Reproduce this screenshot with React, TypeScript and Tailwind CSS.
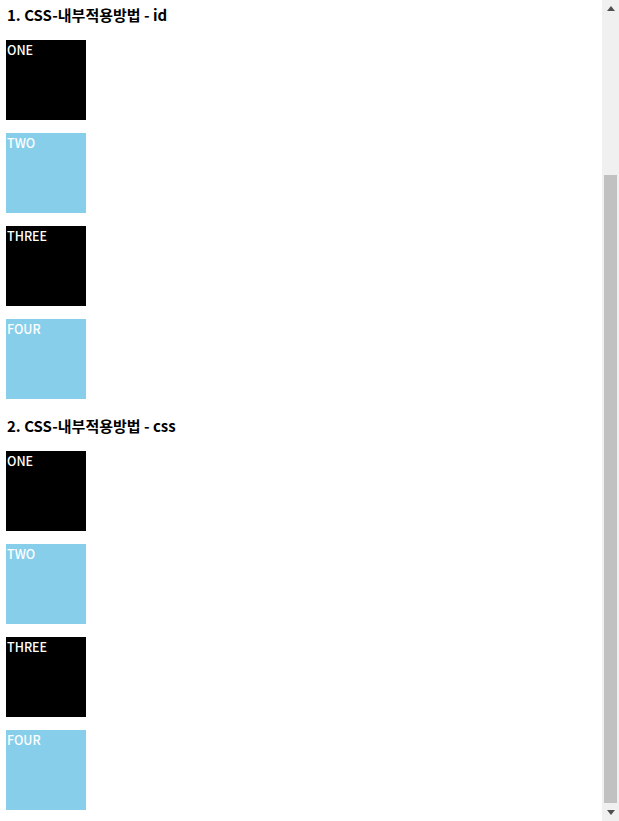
import React from "react";

const font = { fontFamily: '"Noto Sans CJK KR", "Noto Sans", sans-serif' };

function Box({ label, dark }: { label: string; dark: boolean }) {
  return (
    <div
      className={`w-[80px] h-[80px] pl-[1px] text-white text-[12.5px] leading-[20px] font-medium ${dark ? "bg-black" : "bg-[#87ceeb]"}`}
    >
      {label}
    </div>
  );
}

function Section({ title }: { title: string }) {
  return (
    <div className="flex flex-col">
      <h2 className="text-[15px] leading-[22px] font-bold text-black pl-[1px] mb-[14px]">{title}</h2>
      <div className="flex flex-col gap-[13px]">
        <Box label="ONE" dark />
        <Box label="TWO" dark={false} />
        <Box label="THREE" dark />
        <Box label="FOUR" dark={false} />
      </div>
    </div>
  );
}

export default function App() {
  return (
    <div className="w-[619px] h-[821px] flex overflow-hidden bg-white" style={font}>
      <div className="flex-1 flex flex-col pl-[6px] pt-[4px] gap-[16px]">
        <Section title="1. CSS-내부적용방법 - id" />
        <Section title="2. CSS-내부적용방법 - css" />
      </div>
      <div className="w-[17px] h-full bg-[#f0f0f0] flex flex-col items-center">
        <div className="h-[17px] flex items-center justify-center">
          <svg width="8" height="5" viewBox="0 0 8 5"><path d="M4 0 L8 5 L0 5 Z" fill="#505050" /></svg>
        </div>
        <div className="w-full flex-1 flex flex-col pt-[158px] pb-[1px] px-[2px]">
          <div className="flex-1 bg-[#c1c1c1]" />
        </div>
        <div className="h-[17px] flex items-center justify-center">
          <svg width="8" height="5" viewBox="0 0 8 5"><path d="M0 0 L8 0 L4 5 Z" fill="#505050" /></svg>
        </div>
      </div>
    </div>
  );
}
